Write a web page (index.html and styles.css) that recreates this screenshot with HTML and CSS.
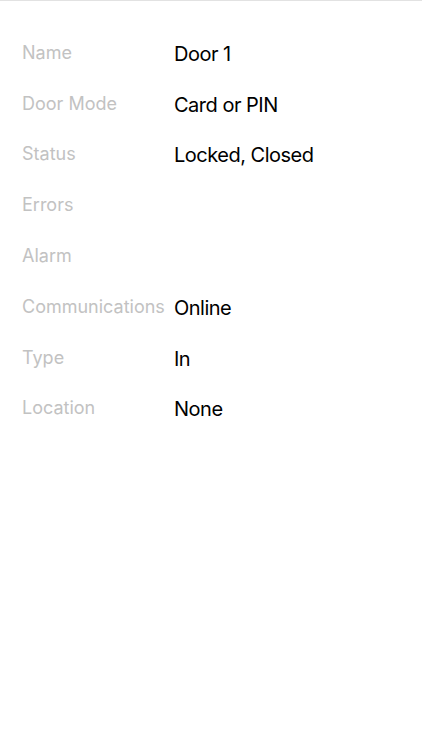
FILE: index.html
```html
<!DOCTYPE html>
<html>
<head>
<meta charset="utf-8">
<link rel="stylesheet" href="styles.css">
</head>
<body>
<div class="page">
  <dl class="details">
    <div class="row"><dt>Name</dt><dd>Door 1</dd></div>
    <div class="row"><dt>Door Mode</dt><dd>Card or PIN</dd></div>
    <div class="row"><dt>Status</dt><dd>Locked, Closed</dd></div>
    <div class="row"><dt>Errors</dt><dd></dd></div>
    <div class="row"><dt>Alarm</dt><dd></dd></div>
    <div class="row"><dt>Communications</dt><dd>Online</dd></div>
    <div class="row"><dt>Type</dt><dd>In</dd></div>
    <div class="row"><dt>Location</dt><dd>None</dd></div>
  </dl>
</div>
</body>
</html>
```
FILE: styles.css
```css
html, body {
  margin: 0;
  padding: 0;
  background: #ffffff;
}
.page {
  width: 422px;
  height: 750px;
  border-top: 1px solid #e2e2e2;
  box-sizing: border-box;
  font-family: Inter, "Liberation Sans", sans-serif;
}
.details {
  margin: 0;
  padding: 26px 0 0 22px;
  display: flex;
  flex-direction: column;
}
.row {
  display: grid;
  grid-template-columns: 152px 1fr;
  align-items: center;
  height: 50.8px;
}
dt {
  font-size: 18px;
  color: #c2c2c2;
  font-weight: 400;
  white-space: nowrap;
}
dd {
  margin: 0;
  font-size: 20px;
  letter-spacing: -0.5px;
  color: #000000;
  padding-top: 3px;
}
```
